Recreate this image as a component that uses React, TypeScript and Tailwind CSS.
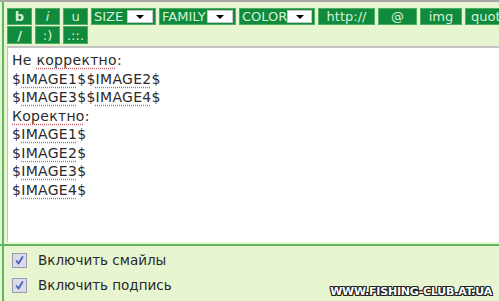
import React from "react";

const Btn = ({ w, children, italic, bold }: { w: number; children: React.ReactNode; italic?: boolean; bold?: boolean }) => (
  <div
    style={{ width: w }}
    className={`h-full shrink-0 bg-[#108a3c] border border-[#4fae5f] flex items-center justify-center text-[13px] leading-none text-[#d9f2d9] ${italic ? "italic" : ""} ${bold ? "font-bold" : ""}`}
  >
    {children}
  </div>
);

const SelBtn = ({ w, label }: { w: number; label: string }) => (
  <div
    style={{ width: w }}
    className="h-full shrink-0 bg-[#108a3c] border border-[#4fae5f] flex items-center pl-[2px] pr-[2px] text-[13px] leading-none text-[#d9f2d9]"
  >
    <span className="flex-1">{label}</span>
    <div className="w-[26px] h-[13px] bg-white border border-[#c8c8c8] flex items-center justify-center">
      <div className="w-0 h-0 border-l-[4px] border-r-[4px] border-t-[4px] border-l-transparent border-r-transparent border-t-black" />
    </div>
  </div>
);

const U = ({ children }: { children: React.ReactNode }) => (
  <span className="underline decoration-dotted decoration-[#c86464] underline-offset-[3px]">{children}</span>
);

const Check = () => (
  <div className="w-[15px] h-[15px] border border-[#9a9ab8] bg-[#dcdce6] flex items-center justify-center">
    <svg width="11" height="11" viewBox="0 0 11 11">
      <path d="M2.5 6 L4.5 8.5 L8.5 2" fill="none" stroke="#4a5ec8" strokeWidth="1.8" strokeLinecap="round" strokeLinejoin="round" />
    </svg>
  </div>
);

export default function App() {
  return (
    <div
      className="w-[499px] h-[301px] overflow-hidden relative bg-[#e7f5d0] border-t-[2px] border-[#a8a8a8]"
      style={{ fontFamily: '"DejaVu Sans", Verdana, sans-serif' }}
    >
      <div className="ml-[2px] h-full border-l-[2px] border-[#5cb85c] flex flex-col">
        <div className="pl-[3px] pt-[6px] flex flex-col gap-[1px]">
          <div className="flex gap-[3px] h-[17px]">
            <Btn w={25} bold>b</Btn>
            <Btn w={25} italic>i</Btn>
            <Btn w={25}>u</Btn>
            <SelBtn w={65} label="SIZE" />
            <SelBtn w={77} label="FAMILY" />
            <SelBtn w={76} label="COLOR" />
            <Btn w={57}>http://</Btn>
            <Btn w={39}>@</Btn>
            <Btn w={42}>img</Btn>
            <div className="w-[50px] h-full shrink-0 bg-[#108a3c] border border-[#4fae5f] flex items-center pl-[5px] text-[13px] leading-none text-[#d9f2d9]">quote</div>
          </div>
          <div className="flex gap-[3px] h-[18px]">
            <Btn w={25} bold>/</Btn>
            <Btn w={25}>:)</Btn>
            <Btn w={25}>.::.</Btn>
          </div>
        </div>
        <div className="ml-[3px] mt-[2px] h-[196px] bg-white border-t-[2px] border-l border-[#c4c4c4] pl-[4px] pt-[3px] text-[14px] leading-[18.5px] text-[#2a2a2a] tracking-[0.3px]">
          <div>Не <U>корректно</U>:</div>
          <div>$<U>IMAGE1</U>$$<U>IMAGE2</U>$</div>
          <div>$<U>IMAGE3</U>$$<U>IMAGE4</U>$</div>
          <div><U>Коректно</U>:</div>
          <div>$<U>IMAGE1</U>$</div>
          <div>$<U>IMAGE2</U>$</div>
          <div>$<U>IMAGE3</U>$</div>
          <div>$<U>IMAGE4</U>$</div>
        </div>
        <div className="mt-[2px] h-[2px] bg-[#5cb85c] -ml-[4px]" />
        <div className="pl-[8px] pt-[6px] flex flex-col gap-[9px] text-[13.5px] text-[#2a2a2a]">
          <div className="flex items-center gap-[11px] h-[16px]">
            <Check />
            <span>Включить смайлы</span>
          </div>
          <div className="flex items-center gap-[11px] h-[16px]">
            <Check />
            <span>Включить подпись</span>
          </div>
        </div>
      </div>
      <div
        className="absolute right-[7px] bottom-[4px] text-[11px] font-bold text-white leading-none tracking-[-0.2px]"
        style={{
          fontFamily: '"DejaVu Sans", sans-serif',
          textShadow:
            "1px 0 0 #222, -1px 0 0 #222, 0 1px 0 #222, 0 -1px 0 #222, 1px 1px 0 #222, -1px -1px 0 #222, 1px -1px 0 #222, -1px 1px 0 #222",
        }}
      >
        WWW.FISHING-CLUB.AT.UA
      </div>
    </div>
  );
}
